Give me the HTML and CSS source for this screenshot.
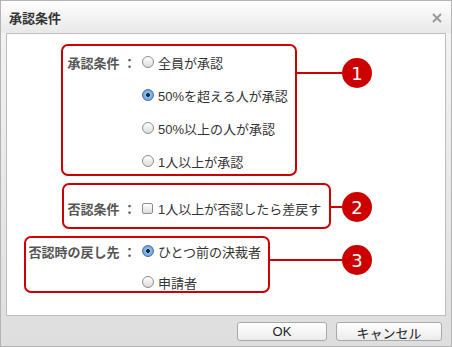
FILE: index.html
```html
<!DOCTYPE html>
<html lang="ja">
<head>
    <meta charset="UTF-8">
    <title>承認条件</title>
    <link rel="stylesheet" href="styles.css">
</head>
<body>
    <div class="dialog">
        <div class="title-bar">
            <span class="title">承認条件</span>
            <svg class="close" width="10" height="10" viewBox="0 0 10 10">
                <path d="M1 1L9 9M9 1L1 9" stroke="#9a9a9a" stroke-width="2"/>
            </svg>
        </div>

        <div class="panel">
            <div class="group group-1">
                <div class="box box-1">
                    <div class="row">
                        <span class="label">承認条件 ：</span>
                        <input type="radio" name="cond"><span class="opt">全員が承認</span>
                    </div>
                    <div class="row">
                        <span class="label"></span>
                        <input type="radio" name="cond" checked><span class="opt">50%を超える人が承認</span>
                    </div>
                    <div class="row">
                        <span class="label"></span>
                        <input type="radio" name="cond"><span class="opt">50%以上の人が承認</span>
                    </div>
                    <div class="row">
                        <span class="label"></span>
                        <input type="radio" name="cond"><span class="opt">1人以上が承認</span>
                    </div>
                </div>
                <div class="marker"><span class="line"></span><span class="num">1</span></div>
            </div>

            <div class="group group-2">
                <div class="box box-2">
                    <div class="row">
                        <span class="label">否認条件 ：</span>
                        <input type="checkbox"><span class="opt">1人以上が否認したら差戻す</span>
                    </div>
                </div>
                <div class="marker"><span class="line"></span><span class="num">2</span></div>
            </div>

            <div class="group group-3">
                <div class="box box-3">
                    <div class="row">
                        <span class="label">否認時の戻し先 ：</span>
                        <input type="radio" name="back" checked><span class="opt">ひとつ前の決裁者</span>
                    </div>
                    <div class="row">
                        <span class="label"></span>
                        <input type="radio" name="back"><span class="opt">申請者</span>
                    </div>
                </div>
                <div class="marker"><span class="line"></span><span class="num">3</span></div>
            </div>
        </div>

        <div class="footer">
            <button class="btn btn-ok">OK</button>
            <button class="btn btn-cancel">キャンセル</button>
        </div>
    </div>
</body>
</html>
```

FILE: styles.css
```css
body {
    margin: 0;
    font-family: "Liberation Sans", "Noto Sans CJK JP", sans-serif;
    font-size: 13px;
    color: #333;
    background: #fff;
}
.dialog {
    width: 452px;
    height: 347px;
    box-sizing: border-box;
    border: 1px solid #b4b4b4;
    display: flex;
    flex-direction: column;
    background: linear-gradient(#f4f4f4, #dedede);
}
.title-bar {
    height: 32px;
    display: flex;
    align-items: center;
    justify-content: space-between;
    padding: 0 9px 0 8px;
    background: linear-gradient(#ffffff, #e8e8e8);
}
.title {
    font-weight: bold;
    font-size: 13px;
    color: #333;
}
.close {
    margin-top: 1px;
}
.panel {
    height: 283px;
    margin: 0 5px;
    box-sizing: border-box;
    border: 1px solid #bdbdbd;
    background: #fff;
    padding-top: 10px;
    display: flex;
    flex-direction: column;
    gap: 7px;
}
.group {
    display: flex;
    align-items: flex-start;
    width: 365px;
}
.box {
    border: 2px solid #cc0000;
    border-radius: 7px;
    display: flex;
    flex-direction: column;
}
.box-1 {
    margin-left: 54px;
    width: 232px;
    padding: 7px 0 0;
    gap: 15px;
    height: 121px;
}
.box-2 {
    margin-left: 55px;
    width: 265px;
    padding-top: 14px;
    height: 28px;
}
.box-3 {
    margin-left: 17px;
    width: 242px;
    padding-top: 4px;
    gap: 13px;
    height: 49px;
}
.row {
    display: flex;
    align-items: center;
    height: 18px;
    white-space: nowrap;
}
.label {
    font-weight: bold;
    color: #555;
    text-align: right;
    box-sizing: border-box;
    padding-right: 5px;
}
.box-1 .label { width: 78px; }
.box-2 .label { width: 77px; }
.box-3 .label { width: 115px; }
.opt {
    margin-left: 4px;
    color: #333;
}
input[type="radio"] {
    appearance: none;
    margin: 0 0 0 1px;
    width: 12px;
    height: 12px;
    border-radius: 50%;
    border: 1px solid #8e8e8e;
    background: linear-gradient(#ffffff, #dcdcdc);
    box-sizing: border-box;
}
input[type="radio"]:checked {
    border-color: #4a6f9c;
    background: radial-gradient(circle at 50% 50%, #1e2a3a 0, #1e2a3a 1.6px, #8fc0f0 2.2px, #4f8fdc 100%);
}
input[type="checkbox"] {
    appearance: none;
    margin: 0 0 0 1px;
    width: 11px;
    height: 11px;
    border-radius: 2px;
    border: 1px solid #8e8e8e;
    background: linear-gradient(#ffffff, #dcdcdc);
    box-sizing: border-box;
}
.box-2 .opt { margin-left: 5px; }
.marker {
    flex: 1;
    display: flex;
    align-items: center;
}
.group-1 .marker { margin-top: 14px; }
.group-2 .marker { margin-top: 9px; }
.group-3 .marker { margin-top: 9px; }
.line {
    flex: 1;
    height: 2px;
    background: #cc0000;
}
.num {
    width: 30px;
    height: 30px;
    border-radius: 50%;
    background: #cc0000;
    color: #fff;
    font-family: "DejaVu Sans", sans-serif;
    font-size: 18px;
    display: flex;
    align-items: center;
    justify-content: center;
}
.footer {
    flex: 1;
    display: flex;
    justify-content: flex-end;
    align-items: center;
    gap: 9px;
    padding: 0 9px 2px 0;
}
.btn {
    height: 19px;
    border: 1px solid #a8a8a8;
    border-radius: 3px;
    background: linear-gradient(#ffffff, #ececec);
    font-family: "Liberation Sans", "Noto Sans CJK JP", sans-serif;
    font-size: 13px;
    color: #222;
    padding: 0;
    margin-top: 3px;
}
.btn-ok { width: 90px; }
.btn-cancel { width: 106px; }
```
